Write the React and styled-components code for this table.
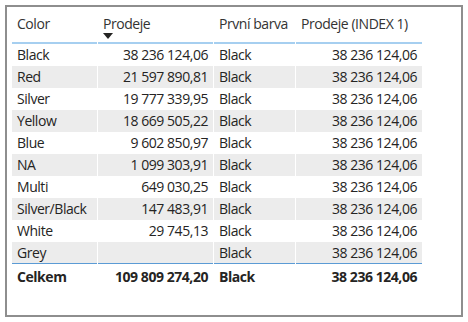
import React from 'react';
import styled, { createGlobalStyle } from 'styled-components';

const GlobalStyle = createGlobalStyle`
    body {
        margin: 0;
        background: #ffffff;
        font-family: "Open Sans", "Noto Sans", sans-serif;
    }
`

const Frame = styled.div`
    box-sizing: border-box;
    margin: 5px;
    width: 458px;
    height: 312px;
    border: 2px solid #8e8e8e;
    padding: 0 0 0 5px;
    background: #ffffff;
`

const Grid = styled.div`
    display: grid;
    grid-template-columns: 85px 115px 81px 126px;
    column-gap: 1px;
    width: 410px;
    font-size: 14px;
    letter-spacing: -0.45px;
    color: #252423;
`

const HeadCell = styled.div`
    box-sizing: border-box;
    height: 37px;
    padding: 7px 5px 0;
    border-bottom: 2px solid #a6cff0;
    text-align: ${props => props.$right ? "right" : "left"};
    color: #333333;
    white-space: nowrap;
`

const HeadLabel = styled.div`
    line-height: 20px;
`

const SortArrow = styled.svg`
    display: block;
    margin-top: -1px;
`

const Cell = styled.div`
    box-sizing: border-box;
    height: 22px;
    line-height: 22px;
    padding: 0 5px;
    background: ${props => props.$striped ? "#ececec" : "#ffffff"};
    text-align: ${props => props.$right ? "right" : "left"};
    border-bottom: ${props => props.$last ? "1px solid #5b9bd5" : "none"};
    white-space: nowrap;
`

const TotalCell = styled.div`
    box-sizing: border-box;
    height: 26px;
    line-height: 26px;
    padding: 0 5px;
    font-weight: 700;
    text-align: ${props => props.$right ? "right" : "left"};
    white-space: nowrap;
`

const rows = [
    {color: "Black", sales: "38 236 124,06"},
    {color: "Red", sales: "21 597 890,81"},
    {color: "Silver", sales: "19 777 339,95"},
    {color: "Yellow", sales: "18 669 505,22"},
    {color: "Blue", sales: "9 602 850,97"},
    {color: "NA", sales: "1 099 303,91"},
    {color: "Multi", sales: "649 030,25"},
    {color: "Silver/Black", sales: "147 483,91"},
    {color: "White", sales: "29 745,13"},
    {color: "Grey", sales: ""},
]

function App() {
    return (
        <>
            <GlobalStyle/>
            <Frame>
                <Grid>
                    <HeadCell><HeadLabel>Color</HeadLabel></HeadCell>
                    <HeadCell>
                        <HeadLabel>Prodeje</HeadLabel>
                        <SortArrow width="10" height="6" viewBox="0 0 10 6">
                            <path d="M0 0 H10 L5 6 Z" fill="#252423"/>
                        </SortArrow>
                    </HeadCell>
                    <HeadCell><HeadLabel>První barva</HeadLabel></HeadCell>
                    <HeadCell><HeadLabel>Prodeje (INDEX 1)</HeadLabel></HeadCell>

                    {rows.map((row, index) => {
                        const striped = index % 2 === 1;
                        const last = index === rows.length - 1;
                        return (
                            <React.Fragment key={row.color}>
                                <Cell $striped={striped} $last={last}>{row.color}</Cell>
                                <Cell $striped={striped} $last={last} $right>{row.sales}</Cell>
                                <Cell $striped={striped} $last={last}>Black</Cell>
                                <Cell $striped={striped} $last={last} $right>38 236 124,06</Cell>
                            </React.Fragment>
                        )
                    })}

                    <TotalCell>Celkem</TotalCell>
                    <TotalCell $right>109 809 274,20</TotalCell>
                    <TotalCell>Black</TotalCell>
                    <TotalCell $right>38 236 124,06</TotalCell>
                </Grid>
            </Frame>
        </>
    );
}

export default App;
